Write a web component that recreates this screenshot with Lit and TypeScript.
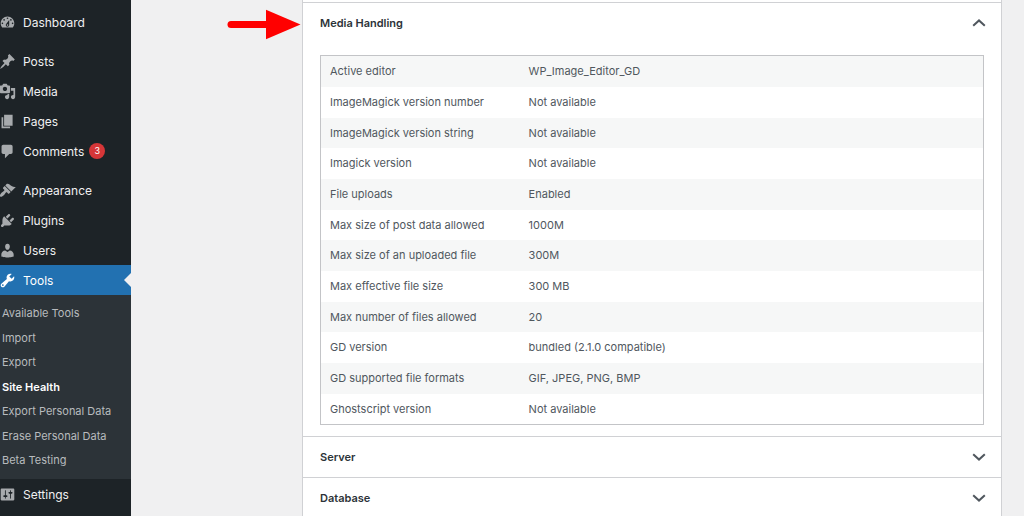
import { LitElement, html, css, svg, nothing } from "lit";
import { customElement, property, state } from "lit/decorators.js";
import { classMap } from "lit/directives/class-map.js";

const ICONS: Record<string, string> = {
  dashboard:
    "M3.76 16h12.48c1.1-1.37 1.76-3.11 1.76-5 0-4.42-3.58-8-8-8s-8 3.58-8 8c0 1.89.66 3.63 1.76 5zM10 4c.55 0 1 .45 1 1s-.45 1-1 1-1-.45-1-1 .45-1 1-1zM6 6c.55 0 1 .45 1 1s-.45 1-1 1-1-.45-1-1 .45-1 1-1zm8 0c.55 0 1 .45 1 1s-.45 1-1 1-1-.45-1-1 .45-1 1-1zm-5.37 5.55L12 7v6c0 1.1-.9 2-2 2s-2-.9-2-2c0-.57.24-1.08.63-1.45zM4 10c.55 0 1 .45 1 1s-.45 1-1 1-1-.45-1-1 .45-1 1-1zm12 0c.55 0 1 .45 1 1s-.45 1-1 1-1-.45-1-1 .45-1 1-1zm-5 3c0-.55-.45-1-1-1s-1 .45-1 1 .45 1 1 1 1-.45 1-1z",
  posts:
    "M10.44 3.02l1.82-1.82 6.36 6.35-1.83 1.82c-1.05-.68-2.48-.57-3.41.36l-.75.75c-.92.93-1.04 2.35-.35 3.41l-1.83 1.82-2.41-2.41-2.8 2.79c-.42.42-3.38 2.71-3.8 2.29s1.86-3.39 2.28-3.81l2.79-2.79L4.1 9.36l1.83-1.82c1.05.69 2.48.57 3.4-.36l.75-.75c.93-.92 1.05-2.35.36-3.41z",
  media:
    "M13 11V4c0-.55-.45-1-1-1h-1.67L9 1H5L3.67 3H2c-.55 0-1 .45-1 1v7c0 .55.45 1 1 1h10c.55 0 1-.45 1-1zM7 4.5c1.38 0 2.5 1.12 2.5 2.5S8.38 9.5 7 9.5 4.5 8.38 4.5 7 5.62 4.5 7 4.5zM14 6h5v10.5c0 1.38-1.12 2.5-2.5 2.5S14 17.88 14 16.5s1.12-2.5 2.5-2.5c.17 0 .34.02.5.05V9h-3V6zm-4 8.05V13h2v3.5c0 1.38-1.12 2.5-2.5 2.5S7 17.88 7 16.5 8.12 14 9.5 14c.17 0 .34.02.5.05z",
  pages: "M6 15V2h10v13H6zm-1 1h8v2H3V5h2v11z",
  comments:
    "M5 2h9c1.1 0 2 .9 2 2v7c0 1.1-.9 2-2 2h-2l-5 5v-5H5c-1.1 0-2-.9-2-2V4c0-1.1.9-2 2-2z",
  appearance:
    "M14.48 11.06L7.41 3.99l1.5-1.5c.5-.56 2.3-.47 3.51.32 1.21.8 1.43 1.28 2.91 2.1 1.18.64 2.45 1.26 4.45.85zm-.71.71L6.7 4.7 4.93 6.47c-.39.39-.39 1.02 0 1.41l1.06 1.06c.39.39.39 1.03 0 1.42-.6.6-1.43 1.11-2.21 1.69-.35.26-.7.53-1.01.84C1.43 14.23.4 16.08 1.4 17.07c.99 1 2.84-.03 4.18-1.36.31-.31.58-.66.85-1.02.57-.78 1.08-1.61 1.69-2.21.39-.39 1.02-.39 1.41 0l1.06 1.06c.39.39 1.02.39 1.41 0z",
  plugins:
    "M13.11 4.36L9.87 7.6 8 5.73l3.24-3.24c.35-.34 1.05-.2 1.56.32.52.51.66 1.21.31 1.55zm-8 1.77l.91-1.12 9.01 9.01-1.19.84c-.71.71-2.63 1.16-3.82 1.16H6.14L4.9 17.26c-.59.59-1.54.59-2.12 0-.59-.58-.59-1.53 0-2.12l1.24-1.24v-3.88c0-1.13.4-3.19 1.09-3.89zm7.26 3.97l3.24-3.24c.34-.35 1.04-.21 1.55.31.52.51.66 1.21.31 1.55l-3.24 3.25z",
  users:
    "M10 9.25c-2.27 0-2.73-3.44-2.73-3.44C7 4.02 7.82 2 9.97 2c2.16 0 2.98 2.02 2.71 3.81 0 0-.41 3.44-2.68 3.44zm0 2.57L12.72 10c2.39 0 4.52 2.33 4.52 4.53v2.49s-3.65 1.13-7.24 1.13c-3.65 0-7.24-1.13-7.24-1.13v-2.49c0-2.25 1.94-4.48 4.47-4.48z",
  tools:
    "M16.68 9.77c-1.34 1.34-3.3 1.67-4.95.99l-5.41 6.52c-.99.99-2.59.99-3.58 0s-.99-2.59 0-3.57l6.52-5.42c-.68-1.65-.35-3.61.99-4.95 1.28-1.28 3.12-1.62 4.72-1.06l-2.89 2.89 2.82 2.82 2.86-2.87c.53 1.58.18 3.39-1.08 4.65zM3.81 16.21c.4.39 1.04.39 1.43 0 .4-.4.4-1.04 0-1.43-.39-.4-1.03-.4-1.43 0-.39.39-.39 1.03 0 1.43z",
  settings:
    "M18 16V4c0-.55-.45-1-1-1H3c-.55 0-1 .45-1 1v12c0 .55.45 1 1 1h14c.55 0 1-.45 1-1zM8 11h1c.55 0 1 .45 1 1s-.45 1-1 1H8v1.5c0 .28-.22.5-.5.5s-.5-.22-.5-.5V13H6c-.55 0-1-.45-1-1s.45-1 1-1h1V5.5c0-.28.22-.5.5-.5s.5.22.5.5V11zm5-2h-1c-.55 0-1-.45-1-1s.45-1 1-1h1V5.5c0-.28.22-.5.5-.5s.5.22.5.5V7h1c.55 0 1 .45 1 1s-.45 1-1 1h-1v5.5c0 .28-.22.5-.5.5s-.5-.22-.5-.5V9z",
};

interface MenuItem {
  label: string;
  icon: string;
  count?: number;
  children?: string[];
}

const MENU: MenuItem[][] = [
  [{ label: "Dashboard", icon: "dashboard" }],
  [
    { label: "Posts", icon: "posts" },
    { label: "Media", icon: "media" },
    { label: "Pages", icon: "pages" },
    { label: "Comments", icon: "comments", count: 3 },
  ],
  [
    { label: "Appearance", icon: "appearance" },
    { label: "Plugins", icon: "plugins" },
    { label: "Users", icon: "users" },
    {
      label: "Tools",
      icon: "tools",
      children: [
        "Available Tools",
        "Import",
        "Export",
        "Site Health",
        "Export Personal Data",
        "Erase Personal Data",
        "Beta Testing",
      ],
    },
    { label: "Settings", icon: "settings" },
  ],
];

const MEDIA_ROWS: [string, string][] = [
  ["Active editor", "WP_Image_Editor_GD"],
  ["ImageMagick version number", "Not available"],
  ["ImageMagick version string", "Not available"],
  ["Imagick version", "Not available"],
  ["File uploads", "Enabled"],
  ["Max size of post data allowed", "1000M"],
  ["Max size of an uploaded file", "300M"],
  ["Max effective file size", "300 MB"],
  ["Max number of files allowed", "20"],
  ["GD version", "bundled (2.1.0 compatible)"],
  ["GD supported file formats", "GIF, JPEG, PNG, BMP"],
  ["Ghostscript version", "Not available"],
];

@customElement("admin-menu")
export class AdminMenu extends LitElement {
  static styles = css`
    :host {
      display: block;
      background: #1d2327;
      color: #f0f0f1;
      font-size: 12px;
    }
    .menu {
      padding-top: 7px;
    }
    ul {
      list-style: none;
      margin: 0;
      padding: 0;
    }
    .group {
      margin-bottom: 9px;
    }
    a {
      color: inherit;
      text-decoration: none;
    }
    .item {
      display: flex;
      align-items: center;
      height: 30px;
      position: relative;
    }
    .icon {
      flex: none;
      width: 17px;
      height: 17px;
      margin: 0 7px 0 -1px;
      fill: #a7aaad;
    }
    .badge {
      min-width: 16px;
      height: 16px;
      margin-left: 5px;
      border-radius: 8px;
      background: #d63638;
      color: #fff;
      font-size: 9px;
      line-height: 16px;
      text-align: center;
    }
    .current {
      background: #2271b1;
      color: #fff;
    }
    .current .icon {
      fill: #fff;
    }
    .current::after {
      content: "";
      position: absolute;
      right: 0;
      border: 7px solid transparent;
      border-right-color: #f0f0f1;
      border-left-width: 0;
    }
    .sub {
      padding: 6px 0;
      background: #2c3338;
      color: #b8bbbe;
      font-size: 11px;
    }
    .sub a {
      display: block;
      padding-left: 2px;
      line-height: 24px;
      white-space: nowrap;
    }
    .sub li:nth-child(odd) a {
      line-height: 25px;
    }
    .sub .here {
      color: #fff;
      font-weight: 600;
    }
  `;

  private renderItem(item: MenuItem) {
    return html`<li>
      <a class=${classMap({ item: true, current: !!item.children })} href="#">
        <svg class="icon" viewBox="0 0 20 20" aria-hidden="true">
          ${svg`<path fill-rule="evenodd" d=${ICONS[item.icon]}></path>`}
        </svg>
        <span>${item.label}</span>
        ${item.count ? html`<span class="badge">${item.count}</span>` : nothing}
      </a>
      ${item.children
        ? html`<ul class="sub">
            ${item.children.map(
              (c) => html`<li><a class=${classMap({ here: c === "Site Health" })} href="#">${c}</a></li>`
            )}
          </ul>`
        : nothing}
    </li>`;
  }

  render() {
    return html`<nav class="menu" aria-label="Main menu">
      ${MENU.map((g) => html`<ul class="group">${g.map((i) => this.renderItem(i))}</ul>`)}
    </nav>`;
  }
}

@customElement("health-section")
export class HealthSection extends LitElement {
  @property() heading = "";
  @property({ type: Boolean, reflect: true }) open = false;

  static styles = css`
    :host {
      display: block;
      border-top: 1px solid #d0d1d4;
    }
    h3 {
      margin: 0;
      font-size: inherit;
    }
    button {
      display: flex;
      align-items: center;
      justify-content: space-between;
      width: 100%;
      height: 40px;
      padding: 0 15px 0 17px;
      border: 0;
      background: none;
      color: #2c3338;
      font: inherit;
      font-weight: 600;
      text-align: left;
    }
    .chevron {
      width: 14px;
      height: 8px;
      fill: none;
      stroke: #50575e;
      stroke-width: 2;
    }
    :host([open]) .chevron {
      transform: rotate(180deg);
    }
    .body {
      padding: 12px 17px 11px;
    }
  `;

  render() {
    return html`<h3>
        <button
          type="button"
          aria-expanded=${this.open ? "true" : "false"}
          @click=${() => (this.open = !this.open)}
        >
          <span>${this.heading}</span>
          <svg class="chevron" viewBox="0 0 14 8" aria-hidden="true">
            <path d="M1.2 1.2L7 6.6l5.800-5.400"></path>
          </svg>
        </button>
      </h3>
      ${this.open ? html`<div class="body"><slot></slot></div>` : nothing}`;
  }
}

@customElement("app-root")
export class AppRoot extends LitElement {
  @state() private rows = MEDIA_ROWS;

  static styles = css`
    :host {
      display: grid;
      grid-template-columns: 131px minmax(0, 1fr);
      height: 100vh;
      overflow: hidden;
      background: #f0f0f1;
      color: #50575e;
      font-family: Inter, "Liberation Sans", sans-serif;
      font-size: 11px;
    }
    main {
      padding: 0 22px 0 171px;
    }
    .panel {
      position: relative;
      padding-top: 2px;
      border: solid #d0d1d4;
      border-width: 0 1px;
      background: #fff;
    }
    .pointer {
      position: absolute;
      top: 9px;
      right: 100%;
      width: 74px;
      height: 31px;
      margin-right: 2px;
    }
    table {
      width: 100%;
      border: 1px solid #c3c4c7;
      border-spacing: 0;
      table-layout: fixed;
    }
    th,
    td {
      box-sizing: border-box;
      height: 31px;
      padding: 0 9px 1px;
      font-weight: 400;
      text-align: left;
    }
    th {
      width: 30%;
    }
    tr:nth-child(3n) > * {
      height: 30px;
    }
    tr:nth-child(odd) {
      background: #f6f7f7;
    }
  `;

  render() {
    return html`
      <admin-menu></admin-menu>
      <main>
        <div class="panel">
          <svg class="pointer" viewBox="0 0 74 31" aria-hidden="true">
            <path d="M4 15.500H42" stroke="#f00" stroke-width="7" stroke-linecap="round"></path>
            <path d="M39 .8L73.500 15.500L39 30.200Z" fill="#f00"></path>
          </svg>
          <health-section heading="Media Handling" open>
            <table>
              <tbody>
                ${this.rows.map(
                  ([k, v]) => html`<tr>
                    <th scope="row">${k}</th>
                    <td>${v}</td>
                  </tr>`
                )}
              </tbody>
            </table>
          </health-section>
          <health-section heading="Server"></health-section>
          <health-section heading="Database"></health-section>
        </div>
      </main>
    `;
  }
}
